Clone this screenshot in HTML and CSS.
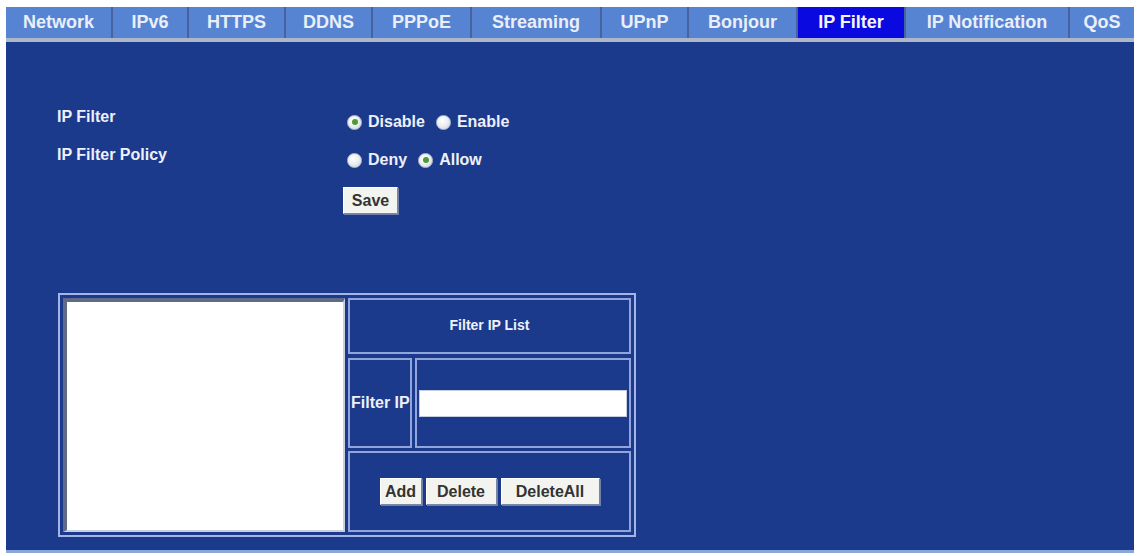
FILE: index.html
```html
<!DOCTYPE html>
<html lang="en">
<head>
<meta charset="utf-8">
<title>IP Filter</title>
<link rel="stylesheet" href="styles.css">
</head>
<body>
<div class="page">
  <nav class="tabs">
    <a class="tab">Network</a>
    <a class="tab">IPv6</a>
    <a class="tab">HTTPS</a>
    <a class="tab">DDNS</a>
    <a class="tab">PPPoE</a>
    <a class="tab">Streaming</a>
    <a class="tab">UPnP</a>
    <a class="tab">Bonjour</a>
    <a class="tab active">IP Filter</a>
    <a class="tab">IP Notification</a>
    <a class="tab">QoS</a>
  </nav>
  <main class="panel">
    <div class="form">
      <div class="row">
        <div class="label">IP Filter</div>
        <div class="value">
          <span class="radio checked"></span><span class="opt">Disable</span>
          <span class="radio"></span><span class="opt">Enable</span>
        </div>
      </div>
      <div class="row">
        <div class="label">IP Filter Policy</div>
        <div class="value">
          <span class="radio"></span><span class="opt">Deny</span>
          <span class="radio checked"></span><span class="opt">Allow</span>
        </div>
      </div>
      <div class="save-row">
        <button class="btn btn-save">Save</button>
      </div>
    </div>

    <div class="frame">
      <div class="list"></div>
      <div class="side">
        <div class="cell title">Filter IP List</div>
        <div class="entry">
          <div class="cell ip-label">Filter IP</div>
          <div class="cell ip-input"><input class="ip-field" type="text"></div>
        </div>
        <div class="cell actions">
          <button class="btn btn-add">Add</button>
          <button class="btn btn-del">Delete</button>
          <button class="btn btn-delall">DeleteAll</button>
        </div>
      </div>
    </div>
  </main>
</div>
</body>
</html>
```

FILE: styles.css
```css
* { box-sizing: border-box; }

html, body {
  margin: 0;
  padding: 0;
  background: #ffffff;
}

body {
  font-family: "Liberation Sans", Arial, sans-serif;
  font-weight: bold;
}

.page {
  margin: 7px 0 0 6px;
  width: 1128px;
}

/* top navigation */
.tabs {
  display: flex;
  gap: 2px;
  height: 35px;
  background: #46639f;
  border-bottom: 4px solid #aeb7c9;
}

.tab {
  height: 31px;
  line-height: 31px;
  text-align: center;
  font-size: 18px;
  color: #e9eef9;
  background: #5684d3;
  white-space: nowrap;
}

.tab:nth-child(1)  { width: 105px; }
.tab:nth-child(2)  { width: 74px; }
.tab:nth-child(3)  { width: 95px; }
.tab:nth-child(4)  { width: 85px; }
.tab:nth-child(5)  { width: 97px; }
.tab:nth-child(6)  { width: 128px; }
.tab:nth-child(7)  { width: 85px; }
.tab:nth-child(8)  { width: 107px; }
.tab:nth-child(9)  { width: 106px; }
.tab:nth-child(10) { width: 162px; }
.tab:nth-child(11) { flex: 1; }

.tab.active {
  background: #0a0ae0;
  color: #f4f4ff;
}

/* main panel */
.panel {
  height: 511px;
  background: #1b3a8c;
  border-bottom: 3px solid #8aa6dc;
  color: #eef0fa;
  font-size: 16px;
  padding-top: 65px;
}

.form {
  padding-left: 51px;
}

.row {
  display: flex;
  height: 38px;
}

.label {
  width: 286px;
  line-height: 20px;
}

.value {
  display: flex;
  align-items: center;
  height: 20px;
  margin-top: 5px;
  padding-left: 4px;
}

.radio {
  position: relative;
  width: 15px;
  height: 15px;
  border-radius: 50%;
  background: radial-gradient(circle at 40% 35%, #ffffff 0%, #eef0f4 45%, #c9ceda 100%);
  border: 1px solid #b9c0d2;
  margin-right: 6px;
}

.radio.checked::after {
  content: "";
  position: absolute;
  left: 3.5px;
  top: 3.5px;
  width: 6px;
  height: 6px;
  border-radius: 50%;
  background: #4f9a36;
}

.opt {
  margin-right: 11px;
}

.save-row {
  padding-left: 286px;
  margin-top: 4px;
}

/* buttons */
.btn {
  height: 27px;
  padding: 0;
  font-family: "Liberation Sans", Arial, sans-serif;
  font-weight: bold;
  font-size: 16px;
  color: #333333;
  background: #f3f3ef;
  border: 1px solid;
  border-color: #ffffff #7a86a6 #7a86a6 #ffffff;
  box-shadow: 1px 1px 0 #6f7fa8;
}

.btn-save   { width: 55px; }
.btn-add    { width: 42px; }
.btn-del    { width: 71px; }
.btn-delall { width: 99px; }

/* filter list frame */
.frame {
  display: flex;
  gap: 3px;
  margin: 79px 0 0 52px;
  width: 578px;
  height: 244px;
  border: 2px solid #a4b4e6;
  padding: 3px;
}

.list {
  width: 282px;
  background: #ffffff;
  border-style: solid;
  border-width: 4px 2px 2px 4px;
  border-color: #5f6b88 #c8cfe0 #c8cfe0 #5f6b88;
}

.side {
  flex: 1;
  display: flex;
  flex-direction: column;
}

.cell {
  border: 2px solid #92a4dc;
}

.title {
  height: 56px;
  display: flex;
  align-items: center;
  justify-content: center;
  font-size: 14px;
  padding-bottom: 2px;
}

.entry {
  display: flex;
  gap: 3px;
  height: 90px;
  margin-top: 4px;
}

.ip-label {
  width: 64px;
  display: flex;
  align-items: center;
  padding-left: 1px;
  white-space: nowrap;
}

.ip-input {
  flex: 1;
  display: flex;
  align-items: center;
  padding: 0 2px;
}

.ip-field {
  width: 100%;
  height: 27px;
  border: 1px solid #c5cde0;
  background: #ffffff;
  margin: 0;
}

.actions {
  height: 81px;
  margin-top: 3px;
  display: flex;
  align-items: center;
  justify-content: center;
  gap: 4px;
}
```
